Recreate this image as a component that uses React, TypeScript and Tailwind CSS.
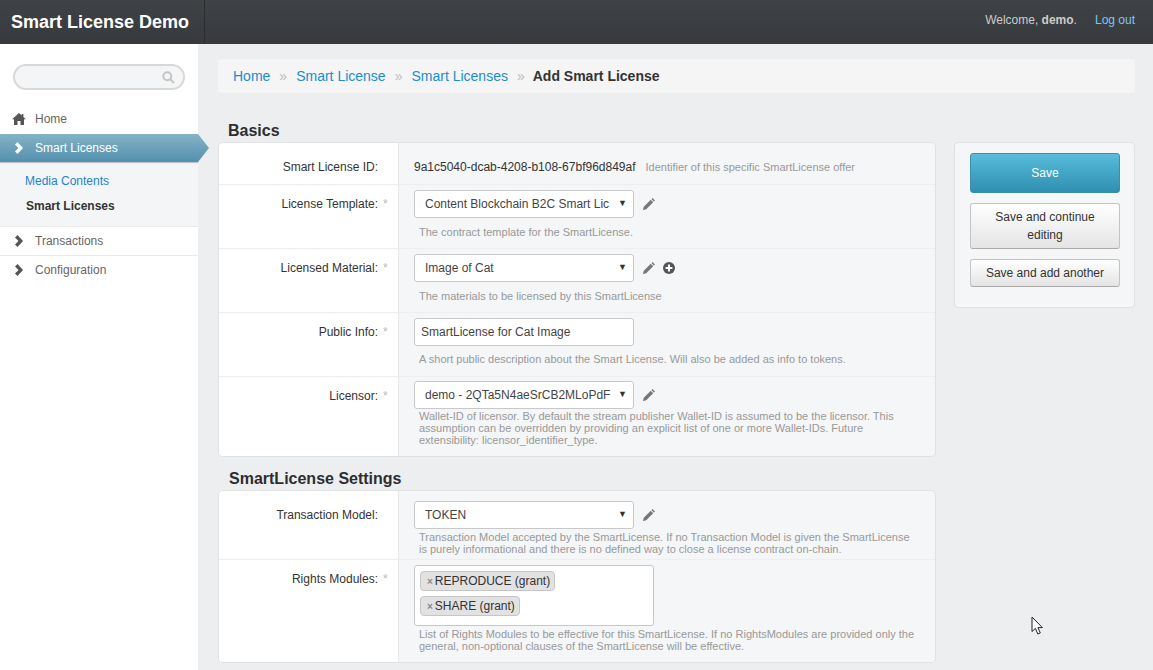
import React from "react";

const Pencil = () => (
  <svg width="14" height="14" viewBox="0 0 14 14" className="shrink-0" fill="#777">
    <path d="M10.6 1 13 3.4 11.9 4.5 9.5 2.1zM8.8 2.8 11.2 5.2 4.2 12.2 1.4 13 1 12.6 1.8 9.8z" />
  </svg>
);
const Plus = () => (
  <svg width="14" height="14" viewBox="0 0 14 14" className="shrink-0">
    <circle cx="7" cy="7" r="6" fill="#555" />
    <path d="M7 3.6v6.8M3.6 7h6.8" stroke="#fff" strokeWidth="2" />
  </svg>
);
const Chevron = ({ color }: { color: string }) => (
  <svg width="8" height="12" viewBox="0 0 8 12" className="shrink-0">
    <path d="M0 2.5 2.5 0 8 6 2.5 12 0 9.5 3.5 6z" fill={color} />
  </svg>
);
const Home = () => (
  <svg width="14" height="12" viewBox="0 0 14 12" className="shrink-0" fill="#555">
    <path d="M7 0 9.6 2.4V1H11.4V4L14 6.3H12V12H8.5V8H5.5V12H2V6.3H0z" />
  </svg>
);
const Select = ({ text }: { text: string }) => (
  <div className="flex h-[28px] w-[220px] items-center justify-between rounded-[3px] border border-[#c8c8c8] bg-white pl-[10px] pr-[6px] text-[12px] text-[#444]">
    <span className="whitespace-nowrap">{text}</span>
    <span className="text-[9px] text-[#333]">▼</span>
  </div>
);
const Help = ({ children, className = "" }: { children: React.ReactNode; className?: string }) => (
  <p className={`pl-[5px] text-[11px] leading-[12px] text-[#999] ${className}`}>{children}</p>
);
const Row = ({
  label,
  req,
  h,
  pt,
  last,
  children,
}: {
  label: string;
  req?: boolean;
  h: string;
  pt: string;
  last?: boolean;
  children: React.ReactNode;
}) => (
  <div className={`flex ${h} ${last ? "" : "border-b border-[#eceef0]"}`}>
    <div className={`flex w-[179px] shrink-0 justify-end bg-white pr-[11px] ${pt} text-[12px] leading-[14px] text-[#333]`}>
      <span>{label}</span>
      <span className="w-[9px] pl-[5px] text-[#bbb]">{req ? "*" : ""}</span>
    </div>
    <div className="min-w-0 flex-1 border-l border-[#e6e8ea] pl-[15px] pr-[15px]">{children}</div>
  </div>
);
const Chip = ({ text }: { text: string }) => (
  <div className="flex h-[20px] w-fit items-center rounded-[4px] border border-[#c6c6c6] bg-[#e2e2e2] pl-[6px] pr-[4px] text-[12px] text-[#333]">
    <span className="mr-[2px] text-[10px] font-bold text-[#888]">×</span>
    {text}
  </div>
);
const SideItem = ({ label, icon, top, h = "h-[29px]" }: { label: string; icon: React.ReactNode; top?: boolean; h?: string }) => (
  <div className={`flex ${h} items-center ${top ? "border-t border-[#eaeaea]" : ""} text-[12px] text-[#666]`}>
    <span className="flex w-[35px] justify-center pl-[3px]">{icon}</span>
    {label}
  </div>
);
const Btn = ({ children, h }: { children: React.ReactNode; h: string }) => (
  <div className={`flex ${h} items-center justify-center rounded-[3px] border border-[#c4c4c4] border-b-[#aaa] bg-gradient-to-b from-white to-[#e4e4e4] px-[14px] text-center text-[12px] leading-[18px] text-[#333]`}>
    {children}
  </div>
);

export default function App() {
  return (
    <div
      className="relative flex h-[670px] w-[1153px] flex-col overflow-hidden bg-[#edeef0]"
      style={{ fontFamily: '"Liberation Sans", Arial, sans-serif' }}
    >
      <header className="flex h-[44px] shrink-0 items-center bg-gradient-to-b from-[#3f4346] to-[#37393d]">
        <div className="flex h-full w-[205px] items-center border-r border-[#2a2c2e] pl-[11px] text-[18px] font-bold text-white">
          Smart License Demo
        </div>
        <div className="ml-auto flex items-center pb-[4px] pr-[18px] text-[12px] text-[#ccc]">
          <span>
            Welcome, <b>demo</b>.
          </span>
          <span className="ml-[18px] text-[#7fc6ee]">Log out</span>
        </div>
      </header>
      <div className="flex min-h-0 flex-1">
        <aside className="w-[198px] shrink-0 bg-white pt-[20px]">
          <div className="mx-[13px] flex h-[26px] items-center justify-end rounded-full border-2 border-[#d8d8d8] bg-[#f4f5f6] pr-[8px]">
            <svg width="13" height="13" viewBox="0 0 13 13" fill="none" stroke="#c4c4c4" strokeWidth="2">
              <circle cx="5.3" cy="5.3" r="4" />
              <path d="M8.4 8.4 12 12" />
            </svg>
          </div>
          <div className="mt-[14px]">
            <SideItem h="h-[30px]" label="Home" icon={<Home />} />
            <div className="relative flex h-[28px] items-center bg-gradient-to-b from-[#85b3c6] to-[#5390ae] text-[12px] text-white shadow-[0_1px_1px_rgba(0,0,0,0.2)]">
              <span className="flex w-[35px] justify-center pl-[3px]">
                <Chevron color="#fff" />
              </span>
              Smart Licenses
              <svg className="absolute left-[198px] top-0" width="11" height="28" viewBox="0 0 11 28">
                <defs>
                  <linearGradient id="g" x1="0" y1="0" x2="0" y2="1">
                    <stop offset="0" stopColor="#85b3c6" />
                    <stop offset="1" stopColor="#5390ae" />
                  </linearGradient>
                </defs>
                <path d="M0 0 11 14 0 28z" fill="url(#g)" />
              </svg>
            </div>
            <div className="flex h-[64px] flex-col bg-[#f4f5f7] pl-[25px] pt-[11px] text-[12px]">
              <div className="h-[25px] leading-[17px] text-[#1c82d0]">Media Contents</div>
              <div className="pl-[1px] font-bold leading-[17px] text-[#333]">Smart Licenses</div>
            </div>
            <SideItem top label="Transactions" icon={<Chevron color="#555" />} />
            <SideItem top label="Configuration" icon={<Chevron color="#555" />} />
          </div>
        </aside>
        <main className="min-w-0 flex-1 pl-[20px] pr-[18px] pt-[15px]">
          <nav className="flex h-[34px] items-center rounded-[4px] bg-[#f5f5f5] pl-[15px] text-[14px]">
            <span className="text-[#1c8ccc]">Home</span>
            <span className="mx-[9px] text-[#bbb]">»</span>
            <span className="text-[#1c8ccc]">Smart License</span>
            <span className="mx-[9px] text-[#bbb]">»</span>
            <span className="text-[#1c8ccc]">Smart Licenses</span>
            <span className="ml-[9px] mr-[8px] text-[#bbb]">»</span>
            <b className="text-[#333]">Add Smart License</b>
          </nav>
          <div className="mt-[28px] flex items-start gap-[18px]">
            <div className="w-[718px] shrink-0">
              <h2 className="h-[21px] pl-[10px] text-[16px] font-bold leading-[20px] text-[#2e2e2e]">Basics</h2>
              <section className="overflow-hidden rounded-[5px] border border-[#dfe1e3] bg-[#f4f6f8]">
                <Row label="Smart License ID:" pt="pt-[17px]" h="h-[42px]">
                  <div className="flex items-baseline pt-[17px] text-[12px] leading-[14px] text-[#333]">
                    9a1c5040-dcab-4208-b108-67bf96d849af
                    <span className="ml-[10px] text-[11px] text-[#999]">Identifier of this specific SmartLicense offer</span>
                  </div>
                </Row>
                <Row label="License Template:" req pt="pt-[12px]" h="h-[64px]">
                  <div className="flex items-center gap-[8px] pt-[5px]">
                    <Select text="Content Blockchain B2C Smart Lic" />
                    <Pencil />
                  </div>
                  <Help className="mt-[8px]">The contract template for the SmartLicense.</Help>
                </Row>
                <Row label="Licensed Material:" req pt="pt-[12px]" h="h-[64px]">
                  <div className="flex items-center pt-[5px]">
                    <Select text="Image of Cat" />
                    <span className="ml-[8px]"><Pencil /></span>
                    <span className="ml-[6px]"><Plus /></span>
                  </div>
                  <Help className="mt-[8px]">The materials to be licensed by this SmartLicense</Help>
                </Row>
                <Row label="Public Info:" req pt="pt-[12px]" h="h-[64px]">
                  <div className="pt-[5px]">
                    <div className="flex h-[28px] w-[220px] items-center rounded-[3px] border border-[#c8c8c8] bg-white pl-[6px] text-[12px] text-[#444]">
                      SmartLicense for Cat Image
                    </div>
                  </div>
                  <Help className="mt-[7px]">A short public description about the Smart License. Will also be added as info to tokens.</Help>
                </Row>
                <Row label="Licensor:" req last pt="pt-[12px]" h="h-[79px]">
                  <div className="flex items-center gap-[8px] pt-[4px]">
                    <Select text="demo - 2QTa5N4aeSrCB2MLoPdF" />
                    <Pencil />
                  </div>
                  <Help className="mt-[1px]">
                    Wallet-ID of licensor. By default the stream publisher Wallet-ID is assumed to be the licensor. This assumption can be overridden by providing an explicit list of one or more Wallet-IDs. Future extensibility: licensor_identifier_type.
                  </Help>
                </Row>
              </section>
              <h2 className="mt-[12px] h-[21px] pl-[11px] text-[16px] font-bold leading-[20px] text-[#2e2e2e]">SmartLicense Settings</h2>
              <section className="overflow-hidden rounded-[5px] border border-[#dfe1e3] bg-[#f4f6f8]">
                <Row label="Transaction Model:" pt="pt-[17px]" h="h-[69px]">
                  <div className="flex items-center gap-[8px] pt-[10px]">
                    <Select text="TOKEN" />
                    <Pencil />
                  </div>
                  <Help className="mt-[2px]">
                    Transaction Model accepted by the SmartLicense. If no Transaction Model is given the SmartLicense is purely informational and there is no defined way to close a license contract on-chain.
                  </Help>
                </Row>
                <Row label="Rights Modules:" req last pt="pt-[12px]" h="h-[102px]">
                  <div className="mt-[5px] flex h-[61px] w-[240px] flex-col gap-[5px] rounded-[3px] border border-[#c8c8c8] bg-white pl-[5px] pt-[5px]">
                    <Chip text="REPRODUCE (grant)" />
                    <Chip text="SHARE (grant)" />
                  </div>
                  <Help className="mt-[2px]">
                    List of Rights Modules to be effective for this SmartLicense. If no RightsModules are provided only the general, non-optional clauses of the SmartLicense will be effective.
                  </Help>
                </Row>
              </section>
            </div>
            <aside className="mt-[21px] flex w-[181px] shrink-0 flex-col gap-[10px] rounded-[4px] border border-[#dfe1e3] bg-[#f4f6f8] pb-[20px] pl-[15px] pr-[14px] pt-[10px]">
              <div className="flex h-[40px] items-center justify-center rounded-[3px] border border-[#3d8dab] bg-gradient-to-b from-[#58bcdc] to-[#2e8fb0] text-[12px] text-white">
                Save
              </div>
              <Btn h="h-[46px]">Save and continue editing</Btn>
              <Btn h="h-[28px]">Save and add another</Btn>
            </aside>
          </div>
        </main>
      </div>
      <svg className="absolute left-[1031px] top-[616px]" width="13" height="20" viewBox="0 0 13 20">
        <path d="M1 1V15.5L4.4 12.4 6.8 18 9.3 16.9 6.9 11.6H11.4z" fill="#fff" stroke="#222" strokeWidth="1" strokeLinejoin="round" />
      </svg>
    </div>
  );
}
